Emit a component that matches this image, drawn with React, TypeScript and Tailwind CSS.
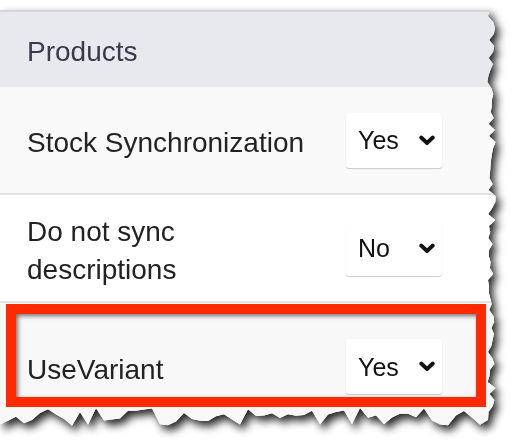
import * as React from 'react';

const PANEL_W = 498;
const PANEL_H = 420;

// torn paper edge along the right and bottom sides
function tornEdge(): string {
  let seed = 11;
  const rnd = () => {
    seed = (seed * 9301 + 49297) % 233280;
    return seed / 233280;
  };
  const pts: string[] = ['0px 0px'];
  for (let y = 0; y <= PANEL_H - 18; y += 6) {
    pts.push(`${(PANEL_W - 2 - rnd() * 9).toFixed(1)}px ${y}px`);
  }
  for (let x = PANEL_W - 10; x >= 0; x -= 8) {
    pts.push(`${x}px ${(PANEL_H - 4 - rnd() * 18).toFixed(1)}px`);
  }
  pts.push(`0px ${PANEL_H - 12}px`);
  return `polygon(${pts.join(', ')})`;
}

function Chevron() {
  return (
    <svg width="16" height="11" viewBox="0 0 16 11" className="shrink-0">
      <polyline points="2.2,2.5 8,8 13.8,2.5" fill="none" stroke="#111" strokeWidth="3.8" strokeLinecap="round" strokeLinejoin="round" />
    </svg>
  );
}

function Select({ value }: { value: string }) {
  return (
    <div className="w-[96px] h-[55px] bg-white rounded-[3px] shadow-[0_1px_1px_rgba(0,0,0,0.2)] flex items-center justify-between pl-[12px] pr-[7px]">
      <span className="text-[25px] text-[#111] pt-[2px]">{value}</span>
      <Chevron />
    </div>
  );
}

function Row({ label, value, className }: { label: React.ReactNode; value: string; className: string }) {
  return (
    <div className={`h-[108px] flex items-center ${className}`}>
      <div className="w-[346px] pl-[27px] pr-[20px] pt-[6px] text-[28px] leading-[38px] text-[#222]">{label}</div>
      <Select value={value} />
    </div>
  );
}

export default function App() {
  const clip = React.useMemo(() => tornEdge(), []);

  return (
    <div className="w-[530px] h-[446px] bg-white pt-[10px] overflow-hidden font-['Liberation_Sans',Arial,sans-serif]">
      <div className="relative w-[498px] h-[420px] drop-shadow-[4px_5px_4px_rgba(0,0,0,0.85)]">
        <div className="w-full h-full bg-white flex flex-col" style={{ clipPath: clip }}>
          <div className="h-[77px] shrink-0 border-t-2 border-[#d6d6d9] bg-[#e8e9ee] flex items-center pl-[27px] pt-[4px] text-[28px] text-[#3a3a4c]">
            Products
          </div>
          <Row label="Stock Synchronization" value="Yes" className="bg-[#f9f9f9] border-b-2 border-[#e2e2e2]" />
          <Row label={<>Do not sync<br />descriptions</>} value="No" className="bg-white border-b-2 border-[#e2e2e2]" />
          <Row label="UseVariant" value="Yes" className="bg-[#f8f8f8] flex-1" />
        </div>

        {/* highlight box */}
        <div className="absolute left-[6px] top-[294px] w-[480px] h-[103px] border-[10px] border-[#ff2a00] shadow-[inset_2px_2px_4px_rgba(0,0,0,0.55)]" />
      </div>
    </div>
  );
}
